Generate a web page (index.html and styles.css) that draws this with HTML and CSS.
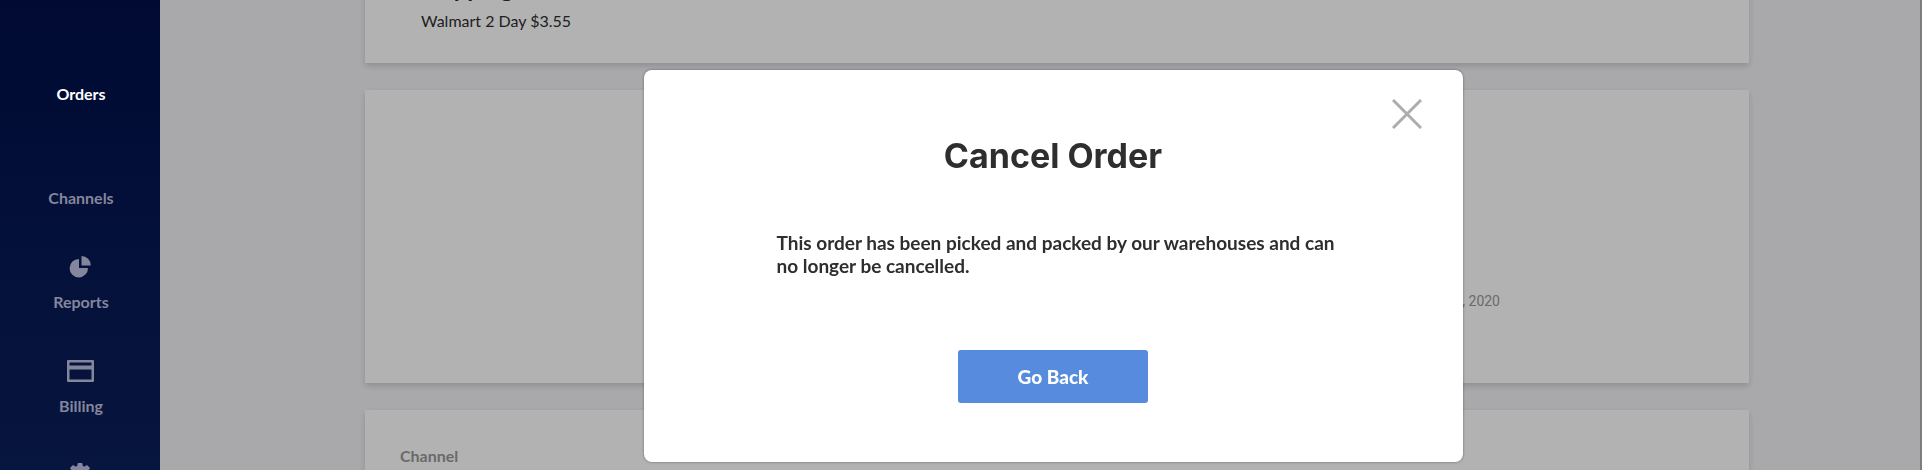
FILE: index.html
```
<!DOCTYPE html>
<html lang="en">

<head>
    <meta charset="UTF-8">
    <meta name="viewport" content="width=device-width, initial-scale=1.0">
    <title>Orders</title>
    <link rel="stylesheet" href="styles.css">
</head>

<body>
    <div class="page">
        <nav class="sidebar">
            <a class="nav-item active" href="#orders">
                <span class="nav-icon"></span>
                Orders
            </a>
            <a class="nav-item" href="#channels">
                <span class="nav-icon"></span>
                Channels
            </a>
            <a class="nav-item" href="#reports">
                <span class="nav-icon">
                    <svg width="22" height="22" viewBox="0 0 22 22">
                        <path d="M10 3v9h9a9.200 9.200 0 1 1-9-9z" />
                        <path d="M12.500 0A9.200 9.200 0 0 1 21.700 9.500h-9.200z" />
                    </svg>
                </span>
                Reports
            </a>
            <a class="nav-item" href="#billing">
                <span class="nav-icon">
                    <svg width="27" height="22" viewBox="0 0 27 22">
                        <path fill-rule="evenodd" d="M1 0h25a1 1 0 0 1 1 1v20a1 1 0 0 1-1 1H1a1 1 0 0 1-1-1V1a1 1 0 0 1 1-1zM2.500 2.500v3h22v-3zM2.500 9.500v10h22v-10z" />
                    </svg>
                </span>
                Billing
            </a>
            <a class="nav-item" href="#settings" aria-label="Settings">
                <span class="nav-icon">
                    <svg width="24" height="24" viewBox="-12 -12 24 24">
                        <path fill-rule="evenodd" d="M0-9.500a9.500 9.500 0 1 0 0 19a9.500 9.500 0 1 0 0-19zM0-4a4 4 0 1 1 0 8a4 4 0 1 1 0-8z" />
                        <path id="tooth" d="M-3-8l.8-4h4.400l.8 4z" />
                        <use href="#tooth" transform="rotate(45)" />
                        <use href="#tooth" transform="rotate(90)" />
                        <use href="#tooth" transform="rotate(135)" />
                        <use href="#tooth" transform="rotate(180)" />
                        <use href="#tooth" transform="rotate(225)" />
                        <use href="#tooth" transform="rotate(270)" />
                        <use href="#tooth" transform="rotate(315)" />
                    </svg>
                </span>
            </a>
        </nav>

        <main class="content">
            <section class="card shipping">
                <h2>Shipping</h2>
                <p>Walmart 2 Day $3.55</p>
            </section>
            <section class="card timeline">
                <time datetime="2020-04-20">Apr 20, 2020</time>
            </section>
            <section class="card channel">
                <h3>Channel</h3>
            </section>
        </main>
    </div>

    <div class="overlay">
        <div class="modal" role="dialog" aria-labelledby="modal-title">
            <button class="close" type="button" aria-label="Close">
                <svg width="30" height="30" viewBox="0 0 30 30">
                    <path d="M1 1l28 28M29 1L1 29" />
                </svg>
            </button>
            <h1 id="modal-title">Cancel Order</h1>
            <p>This order has been picked and packed by our warehouses and can no longer be cancelled.</p>
            <button class="btn" type="button">Go Back</button>
        </div>
    </div>
</body>

</html>
```
FILE: styles.css
```
* {
    box-sizing: border-box;
}

body {
    margin: 0;
    font-family: Lato, sans-serif;
    color: #2e2e2e;
}

h1,
h2,
h3,
p {
    margin: 0;
}

.page {
    display: flex;
    height: 100vh;
    overflow: hidden;
    background-color: #f3f3f5;
    border-right: 2px solid #b5b5b5;
}

/* sidebar */
.sidebar {
    position: relative;
    z-index: 2;
    flex: none;
    width: 160px;
    padding-top: 44px;
    background: linear-gradient(#000a33, #07163f);
}

.nav-item {
    display: flex;
    flex-direction: column;
    align-items: center;
    height: 104px;
    padding-left: 2px;
    font-size: 16px;
    font-weight: bold;
    line-height: 20px;
    color: #83869c;
    text-decoration: none;
}

.nav-item.active {
    color: #fff;
}

.nav-icon {
    display: flex;
    align-items: center;
    height: 30px;
    margin: 0 2px 10px 0;
}

.nav-icon svg {
    fill: #83869c;
}

/* order details */
.content {
    flex: 1;
    margin-top: -60px;
    padding: 0 171px 0 205px;
}

.card {
    margin-bottom: 27px;
    background-color: #fff;
    box-shadow: 0 3px 6px rgba(40, 40, 70, 0.18);
}

.shipping {
    height: 123px;
    padding: 34px 56px;
}

.shipping h2 {
    font-size: 24px;
    line-height: 28px;
}

.shipping p {
    margin-top: 9px;
    font-size: 16px;
    line-height: 20px;
}

.timeline {
    height: 293px;
    padding: 200px 249px 0 0;
    text-align: right;
    font-family: Roboto, sans-serif;
    font-size: 14px;
    line-height: 22px;
    color: #999;
}

.channel {
    height: 200px;
    padding: 36px 35px;
}

.channel h3 {
    font-size: 16px;
    line-height: 20px;
    color: #999;
}

/* modal */
.overlay {
    position: fixed;
    top: 0;
    right: 0;
    bottom: 0;
    left: 0;
    z-index: 1;
    display: flex;
    justify-content: center;
    align-items: flex-start;
    padding: 70px 0 0 184px;
    background-color: rgba(0, 0, 0, 0.3);
}

.modal {
    position: relative;
    display: flex;
    flex-direction: column;
    align-items: center;
    width: 819px;
    padding: 66px 125px 59px;
    border-radius: 8px;
    background-color: #fff;
    box-shadow: 0 0 3px rgba(0, 0, 0, 0.4);
}

.close {
    position: absolute;
    top: 29px;
    right: 41px;
    padding: 0;
    border: 0;
    background: none;
    cursor: pointer;
}

.close svg {
    display: block;
    fill: none;
    stroke: #adadad;
    stroke-width: 3;
}

.modal h1 {
    font-family: Inter, sans-serif;
    font-size: 34px;
    line-height: 40px;
}

.modal p {
    margin-top: 55px;
    padding-left: 8px;
    font-size: 19px;
    font-weight: bold;
    line-height: 23px;
}

.btn {
    width: 190px;
    height: 53px;
    margin-top: 73px;
    padding: 0 0 1px;
    border: 0;
    border-radius: 3px;
    background-color: #568bde;
    font-family: Lato, sans-serif;
    font-size: 19px;
    font-weight: 900;
    color: #fff;
    cursor: pointer;
}
```
